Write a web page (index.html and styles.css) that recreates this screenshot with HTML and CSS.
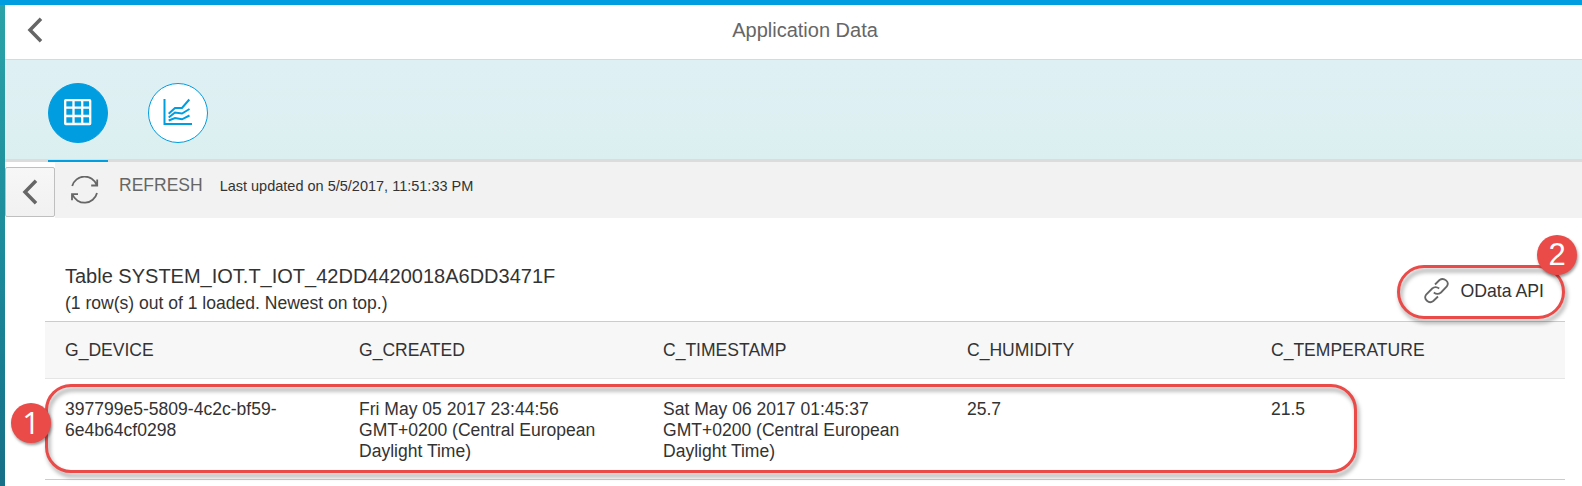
FILE: index.html
```
<!DOCTYPE html>
<html lang="en">
<head>
<meta charset="utf-8">
<title>Application Data</title>
<link rel="stylesheet" href="styles.css">
</head>
<body>
<div class="app">
  <header class="header">
    <button class="back" aria-label="Back"><svg width="16" height="26" viewBox="0 0 16 26"><path d="M14 1.800 3 13 14 24.200" /></svg></button>
    <h1 class="title">Application Data</h1>
  </header>
  <nav class="tabs">
    <div class="tab tab-active">
      <span class="tab-icon"><svg width="60" height="60" viewBox="0 0 60 60"><rect x="17.200" y="17.200" width="25" height="23.800" rx=".5" /><path d="M25.500 17v24M34.200 17v24M17 24.700h25M17 33h25" /></svg></span>
    </div>
    <div class="tab">
      <span class="tab-icon"><svg width="60" height="60" viewBox="0 0 60 60"><path d="M16.500 16v25H44M20.700 30.700 27 25h7l7.300-8.500M20.700 34.500l6.300-5 7 1 7.500-4.500M20.700 37.500 27 35l7 1.300 7.500-3.800" /></svg></span>
    </div>
  </nav>
  <div class="toolbar">
    <div class="collapse"><button class="collapse-button" aria-label="Collapse"><svg width="16" height="26" viewBox="0 0 16 26"><path d="M14 1.800 3 13 14 24.200" /></svg></button></div>
    <div class="tools">
      <svg class="refresh-icon" width="28" height="28" viewBox="0 0 28 28"><path d="M1.200 10A12.900 12.900 0 0 1 25.700 9M26.200 3.500v6h-6M26 17A12.900 12.900 0 0 1 1.500 18.500M1 24.200v-6h6" /></svg>
      <span class="refresh">REFRESH</span>
      <span class="updated">Last updated on 5/5/2017, 11:51:33 PM</span>
    </div>
  </div>
  <main class="content">
    <div class="table-head">
      <div>
        <h2 class="table-title">Table SYSTEM_IOT.T_IOT_42DD4420018A6DD3471F</h2>
        <p class="table-note">(1 row(s) out of 1 loaded. Newest on top.)</p>
      </div>
      <a class="odata"><svg width="26" height="26" viewBox="0 0 26 26"><path d="M11 6.500 15.500 2C20 -1 26 4 22.800 8.500L17 14.500Q13.500 17.300 9.800 14.500M15.200 10.500Q11.500 7.700 8.200 10.500L2.200 16.500C-1 21 5 26.500 9.300 23L14 18.500" /></svg><span>OData API</span></a>
    </div>
    <div class="row row-head">
      <div>G_DEVICE</div><div>G_CREATED</div><div>C_TIMESTAMP</div><div>C_HUMIDITY</div><div>C_TEMPERATURE</div>
    </div>
    <div class="row row-data">
      <div>397799e5-5809-4c2c-bf59-<br>6e4b64cf0298</div>
      <div>Fri May 05 2017 23:44:56 GMT+0200 (Central European Daylight Time)</div>
      <div>Sat May 06 2017 01:45:37 GMT+0200 (Central European Daylight Time)</div>
      <div>25.7</div>
      <div>21.5</div>
    </div>
  </main>
</div>
<div class="callout callout-row"></div>
<div class="badge badge-row">1</div>
<div class="callout callout-api"></div>
<div class="badge badge-api">2</div>
</body>
</html>
```
FILE: styles.css
```
* { box-sizing: border-box; }
body {
  margin: 0;
  height: 486px;
  overflow: hidden;
  position: relative;
  padding-left: 5px;
  border-top: 5px solid #009de0;
  background: linear-gradient(#2ba3a8, #1b899a 55%, #166f87);
  font-family: Arial, "Liberation Sans", sans-serif;
  color: #333;
}
h1, h2, p { margin: 0; font-weight: normal; }
button { display: flex; padding: 0; border: 0; background: none; }
svg { display: block; fill: none; flex: none; }
.app { height: 481px; background: #fff; }
.header {
  height: 55px;
  border-bottom: 1px solid #d9d9d9;
  display: grid;
  grid-template-columns: 1fr auto 1fr;
  align-items: center;
}
.back { padding: 0 0 4px 22px; }
.back svg, .collapse svg { stroke: #666; stroke-width: 3.500; }
.title { font-size: 20px; line-height: 24px; color: #666; padding: 0 0 5px 23px; }
.tabs {
  height: 102px;
  padding: 23px 0 0 43px;
  display: flex;
  gap: 40px;
  background: linear-gradient(#dff0f4, #dceff0);
  border-bottom: 3px solid #dcdcdc;
}
.tab { width: 60px; height: 79px; }
.tab-active { border-bottom: 2px solid #009de0; }
.tab-icon {
  display: block;
  width: 60px;
  height: 60px;
  border: 1px solid #009de0;
  border-radius: 50%;
  background: #fff;
  overflow: hidden;
}
.tab-icon svg { margin: -1px; stroke: #009de0; stroke-width: 2; }
.tab-active .tab-icon { background: #009de0; }
.tab-active .tab-icon svg { stroke: #fff; stroke-width: 2.300; }
.toolbar { height: 56px; display: flex; }
.collapse { width: 50px; padding-top: 5px; }
.collapse-button {
  width: 50px;
  height: 50px;
  border: 1px solid #bfbfbf;
  border-radius: 2px;
  background: linear-gradient(#f7f7f7, #f1f1f1);
  align-items: center;
  justify-content: center;
}
.tools { flex: 1; display: flex; align-items: flex-start; background: #f2f2f2; }
.refresh-icon { margin: 14px 0 0 16px; stroke: #666; stroke-width: 1.800; }
.refresh { margin: 13px 0 0 20px; font-size: 17.500px; line-height: 20px; color: #666; }
.updated { margin: 14px 0 0 17px; font-size: 14.500px; line-height: 20px; }
.content { padding: 45px 17px 0 40px; }
.table-head {
  height: 58px;
  padding: 0 21px 0 20px;
  display: flex;
  justify-content: space-between;
}
.table-title { font-size: 20px; line-height: 26px; }
.table-note { font-size: 17.550px; line-height: 28px; }
.odata { display: flex; gap: 10px; padding-top: 15px; font-size: 17.700px; line-height: 26px; }
.odata svg { stroke: #666; stroke-width: 1.800; overflow: visible; }
.row { display: grid; grid-template-columns: 294px 304px 304px 304px 1fr; font-size: 17.550px; }
.row > div { padding: 0 35px 0 20px; }
.row-head {
  height: 58px;
  border-top: 1px solid #ccc;
  border-bottom: 1px solid #e5e5e5;
  background: #f7f7f7;
  line-height: 56px;
}
.row-data { height: 101px; padding-top: 20px; border-bottom: 1px solid #ccc; line-height: 21px; }
.callout { position: absolute; border: 3px solid #ea4a48; filter: drop-shadow(2px 4px 2px rgba(0, 0, 0, .38)); }
.callout-row { left: 45px; top: 379px; width: 1312px; height: 89px; border-radius: 26px; }
.callout-api { left: 1397px; top: 260px; width: 168px; height: 54px; border-radius: 27px; }
.badge {
  position: absolute;
  width: 40px;
  height: 40px;
  border-radius: 50%;
  background: #ea4a48;
  color: #fff;
  font: 31px/40px "Open Sans", sans-serif;
  text-align: center;
  box-shadow: 1px 2px 3px rgba(0, 0, 0, .4);
}
.badge-row { left: 11px; top: 398px; line-height: 38px; }
.badge-api { left: 1537px; top: 230px; font-family: Arial, "Liberation Sans", sans-serif; }
```
